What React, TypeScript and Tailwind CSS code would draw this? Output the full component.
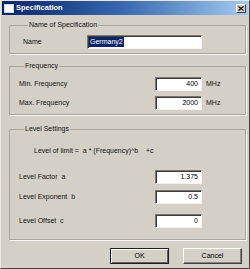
import React from "react";

const font = { fontFamily: '"Liberation Sans", Arial, sans-serif' };

function Field({ value, width = "w-[47px]" }: { value: string; width?: string }) {
  return (
    <div
      className={`${width} h-[14px] bg-white border border-t-[#7a776f] border-l-[#7a776f] border-r-[#f4f3ef] border-b-[#f4f3ef] shadow-[inset_1px_1px_0_#3c3c3c] flex items-center justify-end pr-[3px] text-[7px] text-black`}
    >
      {value}
    </div>
  );
}

function Group({
  title,
  className,
  children,
}: {
  title: string;
  className: string;
  children: React.ReactNode;
}) {
  return (
    <fieldset
      className={`ml-[7px] w-[237px] border border-[#aaa69e] shadow-[1px_1px_0_#f6f5f2] ${className}`}
    >
      <legend className="ml-[5px] px-[1px] text-[7px] leading-[10px] text-[#111]">{title}</legend>
      {children}
    </fieldset>
  );
}

function NumRow({ label, value, unit }: { label: string; value: string; unit?: string }) {
  return (
    <div className="flex items-center">
      <span className="w-[136px] text-[7px] text-[#111] whitespace-pre">{label}</span>
      <Field value={value} />
      {unit && <span className="ml-[4px] text-[7px] text-[#111]">{unit}</span>}
    </div>
  );
}

function Button({ label, primary }: { label: string; primary?: boolean }) {
  return (
    <div
      className={`w-[59px] h-[16px] flex items-center justify-center text-[7px] text-black bg-[#d4d0c8] ${
        primary
          ? "border border-[#202020] shadow-[inset_1px_1px_0_#ffffff,inset_-1px_-1px_0_#606060]"
          : "border border-t-[#ffffff] border-l-[#ffffff] border-r-[#404040] border-b-[#404040] shadow-[inset_-1px_-1px_0_#808080]"
      }`}
    >
      {label}
    </div>
  );
}

export default function App() {
  return (
    <div
      style={font}
      className="w-[250px] h-[269px] bg-[#d4d0c8] border border-t-[#e9e7e2] border-l-[#e9e7e2] border-r-[#404040] border-b-[#404040] px-[1px] flex flex-col"
    >
      <div className="h-[14px] flex items-center bg-gradient-to-r from-[#0a246a] via-[#3a6ab0] to-[#a6caf0] pl-[2px] pr-[2px]">
        <div className="w-[10px] h-[9px] bg-white border border-[#c8d8f0] mr-[2px]" />
        <span className="text-[7.5px] font-bold text-white">Specification</span>
        <div className="ml-auto w-[10px] h-[9px] bg-[#d4d0c8] border border-t-white border-l-white border-r-[#404040] border-b-[#404040] flex items-center justify-center">
          <svg width="6" height="5" viewBox="0 0 6 5">
            <path d="M0.5 0.5 L5.5 4.5 M5.5 0.5 L0.5 4.5" stroke="#000" strokeWidth="1.1" />
          </svg>
        </div>
      </div>

      <Group title="Name of Specification" className="mt-[5px] pl-[13px] pt-[5px] pb-[4px]">
        <div className="flex items-center">
          <span className="w-[64px] text-[7px] text-[#111]">Name</span>
          <div className="w-[115px] h-[14px] bg-white border border-t-[#7a776f] border-l-[#7a776f] border-r-[#f4f3ef] border-b-[#f4f3ef] shadow-[inset_1px_1px_0_#3c3c3c] flex items-center pl-[1px]">
            <span className="bg-[#0a246a] text-white text-[7px] leading-[10px] px-[1px]">Germany2</span>
          </div>
        </div>
      </Group>

      <Group title="Frequency" className="mt-[7px] pl-[9px] pt-[6px] pb-[4px]">
        <div className="flex flex-col gap-[5px]">
          <NumRow label="Min. Frequency" value="400" unit="MHz" />
          <NumRow label="Max. Frequency" value="2000" unit="MHz" />
        </div>
      </Group>

      <Group title="Level Settings" className="mt-[9px] pl-[9px] pt-[12px] pb-[11px]">
        <div className="h-[10px] flex items-center pl-[15px] text-[7px] text-[#111] whitespace-pre">
          {"Level of limit =  a * (Frequency)^b    +c"}
        </div>
        <div className="mt-[14px]">
          <NumRow label="Level Factor  a" value="1.375" />
        </div>
        <div className="mt-[6px]">
          <NumRow label="Level Exponent  b" value="0.5" />
        </div>
        <div className="mt-[10px]">
          <NumRow label="Level Offset  c" value="0" />
        </div>
      </Group>

      <div className="mt-[8px] flex justify-end gap-[14px] pr-[6px]">
        <Button label="OK" primary />
        <Button label="Cancel" />
      </div>
    </div>
  );
}
